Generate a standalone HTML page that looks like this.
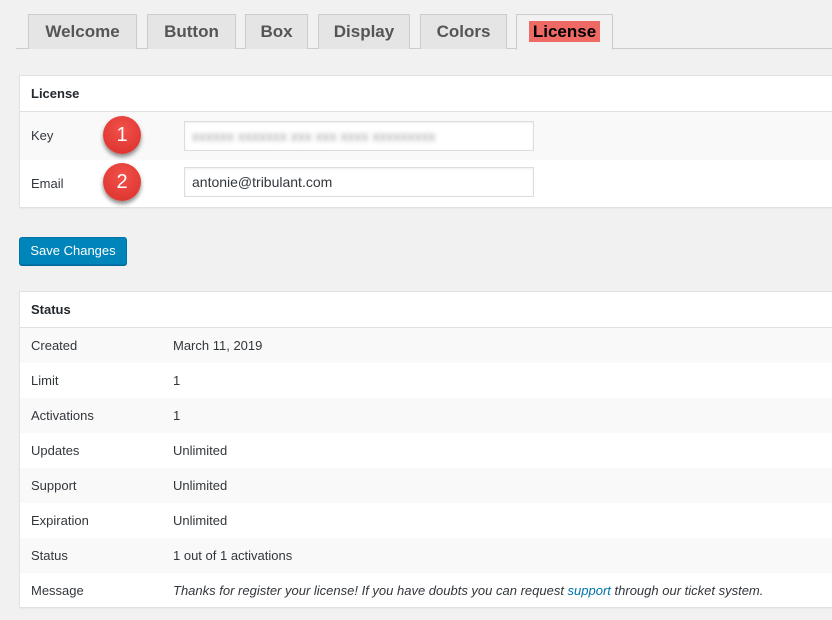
<!DOCTYPE html>
<html><head><style>
*{box-sizing:border-box;margin:0;padding:0}
body{width:832px;height:620px;background:#f1f1f1;font-family:"Liberation Sans",sans-serif;font-size:13px;color:#23282d;position:relative;overflow:hidden}
.tab{position:absolute;top:14px;height:35px;background:#e5e5e5;border:1px solid #ccc;border-bottom:none;font-weight:bold;font-size:17px;color:#555;text-align:center;line-height:33px}
.line{position:absolute;left:16px;right:0;top:48px;border-top:1px solid #ccc}
.panel{position:absolute;left:19px;width:830px;background:#fff;border:1px solid #e1e1e1;box-shadow:0 1px 1px rgba(0,0,0,.04)}
.hd{height:36px;line-height:36px;padding-left:11px;font-weight:bold;font-size:14px;border-bottom:1px solid #e1e1e1}
.row{position:relative;padding-left:11px;color:#32373c}
.alt{background:#f9f9f9}
.v{position:absolute;left:153px;top:0}
.inp{position:absolute;left:164px;width:350px;height:30px;border:1px solid #ddd;background:#fff;box-shadow:inset 0 1px 2px rgba(0,0,0,.07);font-size:14px;line-height:28px;padding-left:7px;color:#32373c}
.badge{position:absolute;width:38px;height:38px;border-radius:50%;background:radial-gradient(circle at 50% 35%,#f2514b,#d92f2a);box-shadow:0 3px 4px rgba(0,0,0,.45);color:#fff;font-size:20px;text-align:center;line-height:38px}
</style></head><body>
<div class="line"></div>
<div class="tab" style="left:28px;width:109px">Welcome</div>
<div class="tab" style="left:147px;width:89px">Button</div>
<div class="tab" style="left:245px;width:63px">Box</div>
<div class="tab" style="left:318px;width:92px">Display</div>
<div class="tab" style="left:420px;width:87px">Colors</div>
<div class="tab" style="left:516px;width:97px;background:#f1f1f1;height:36px;z-index:2"><span style="background:#ef6a64;color:#000;padding:1px 4px">License</span></div>

<div class="panel" style="top:75px;height:133px">
<div class="hd" style="font-size:13px">License</div>
<div class="row alt" style="height:48px;line-height:48px">Key
<div class="inp" style="top:9px;color:transparent;text-shadow:0 0 5px #999">xxxxxx xxxxxxx xxx xxx xxxx xxxxxxxxx</div></div>
<div class="row" style="height:47px;line-height:47px">Email
<div class="inp" style="top:7px">antonie@tribulant.com</div></div>
</div>
<div class="badge" style="left:103px;top:116px">1</div>
<div class="badge" style="left:103px;top:163px">2</div>

<div style="position:absolute;left:19px;top:237px;width:108px;height:28px;background:#0085ba;border:1px solid #0073aa;border-radius:3px;color:#fff;font-size:13px;line-height:26px;text-align:center;box-shadow:0 1px 0 #006799">Save Changes</div>

<div class="panel" style="top:291px;height:317px">
<div class="hd" style="font-size:13px">Status</div>
<div class="row alt" style="height:35px;line-height:35px">Created<span class="v">March 11, 2019</span></div>
<div class="row" style="height:35px;line-height:35px">Limit<span class="v">1</span></div>
<div class="row alt" style="height:35px;line-height:35px">Activations<span class="v">1</span></div>
<div class="row" style="height:35px;line-height:35px">Updates<span class="v">Unlimited</span></div>
<div class="row alt" style="height:35px;line-height:35px">Support<span class="v">Unlimited</span></div>
<div class="row" style="height:35px;line-height:35px">Expiration<span class="v">Unlimited</span></div>
<div class="row alt" style="height:35px;line-height:35px">Status<span class="v">1 out of 1 activations</span></div>
<div class="row" style="height:35px;line-height:35px">Message<span class="v" style="font-style:italic">Thanks for register your license! If you have doubts you can request <span style="color:#0073aa">support</span> through our ticket system.</span></div>
</div>
</body></html>
